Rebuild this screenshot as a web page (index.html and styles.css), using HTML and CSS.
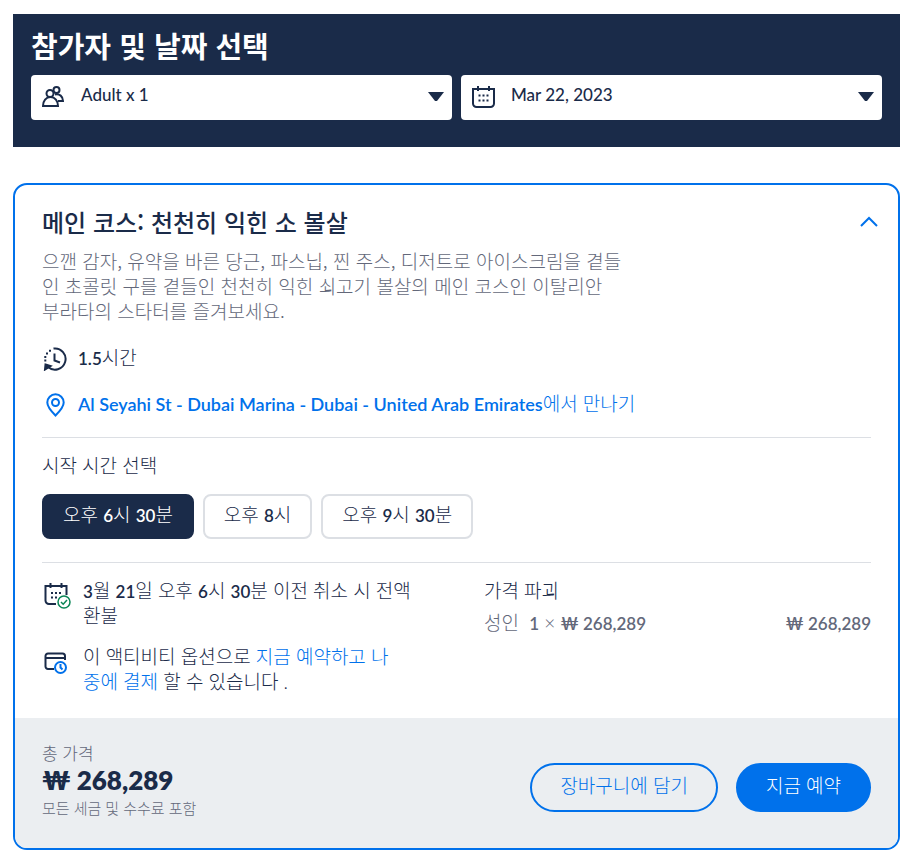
FILE: index.html
```html
<!DOCTYPE html>
<html lang="ko">
<head>
    <meta charset="UTF-8">
    <meta name="viewport" content="width=device-width, initial-scale=1.0">
    <title>참가자 및 날짜 선택</title>
    <link rel="stylesheet" href="styles.css">
</head>
<body>
    <form class="picker">
        <h2>참가자 및 날짜 선택</h2>
        <div class="picker-fields">
            <div class="field">
                <svg class="icon" viewBox="0 0 24 24" aria-hidden="true">
                    <circle cx="15.500" cy="5" r="3"/>
                    <path d="M14 9.500c4.500-1.200 8 2 8 6.500h-5"/>
                    <circle class="cover" cx="9" cy="8.500" r="3.500"/>
                    <path class="cover" d="M2 21c0-5 3-9 7.500-9S17 16 17 21z"/>
                </svg>
                <select id="participants" aria-label="참가자">
                    <option>Adult x 1</option>
                </select>
                <span class="arrow"></span>
            </div>
            <div class="field">
                <svg class="icon" viewBox="0 0 24 24" aria-hidden="true">
                    <path d="M2 4h21v14.500a3.500 3.500 0 0 1-3.500 3.500h-14A3.500 3.500 0 0 1 2 18.500zM7 1v5M18 1v5"/>
                    <path class="dots" d="M7.500 10.500h10M7.500 15.500h10"/>
                </svg>
                <select id="date" aria-label="날짜">
                    <option>Mar 22, 2023</option>
                </select>
                <span class="arrow"></span>
            </div>
        </div>
    </form>

    <article class="option">
        <div class="option-body">
            <header class="option-header">
                <h3>메인 코스: 천천히 익힌 소 볼살</h3>
                <button type="button" class="toggle" aria-label="접기" aria-expanded="true">
                    <svg viewBox="0 0 20 12" aria-hidden="true"><path d="M2 10l8-8 8 8"/></svg>
                </button>
            </header>
            <p class="description">으깬 감자, 유약을 바른 당근, 파스닙, 찐 주스, 디저트로 아이스크림을 곁들<br>인 초콜릿 구를 곁들인 천천히 익힌 쇠고기 볼살의 메인 코스인 이탈리안<br>부라타의 스타터를 즐겨보세요.</p>

            <div class="info">
                <svg class="icon" viewBox="0 0 24 24" aria-hidden="true">
                    <path d="M10.500 1.500A10.600 10.600 0 1 1 5 20"/>
                    <path d="M11.500 6.500v7l5.500 2"/>
                    <path class="solid" d="M2.500 17.500l5 1.500-5.500 3.500z"/>
                    <path d="M6 3.800h2M3 6.500h2M1.300 10h2M1.300 13.500h2"/>
                </svg>
                <span><b>1.5</b>시간</span>
            </div>
            <div class="info">
                <svg class="icon blue" viewBox="0 0 24 24" aria-hidden="true">
                    <path d="M12.500 22.500c-5-5-8.200-9-8.200-13a8.200 8.200 0 0 1 16.400 0c0 4-3.200 8-8.200 13z"/>
                    <circle cx="12.500" cy="9.500" r="3.500"/>
                </svg>
                <a href="#"><b class="address">Al Seyahi St - Dubai Marina - Dubai - United Arab Emirates</b>에서 만나기</a>
            </div>

            <section class="times">
                <h4>시작 시간 선택</h4>
                <div class="time-list">
                    <button type="button" class="time selected" aria-pressed="true">오후 <b>6</b>시 <b>30</b>분</button>
                    <button type="button" class="time" aria-pressed="false">오후 <b>8</b>시</button>
                    <button type="button" class="time" aria-pressed="false">오후 <b>9</b>시 <b>30</b>분</button>
                </div>
            </section>

            <section class="details">
                <div class="policies">
                    <div class="policy">
                        <svg class="icon-lg" viewBox="0 0 28 28" aria-hidden="true">
                            <path d="M13 22H6a3.500 3.500 0 0 1-3.500-3.500V4h21v9M7.500 1v5M18.500 1v5"/>
                            <path class="dots" d="M8 11h10M8 15.500h6"/>
                            <circle class="green" cx="21" cy="20" r="6"/>
                            <path class="green" d="M18 20l2.200 2.200L24 18"/>
                        </svg>
                        <p><b>3</b>월 <b>21</b>일 오후 <b>6</b>시 <b>30</b>분 이전 취소 시 전액<br>환불</p>
                    </div>
                    <div class="policy">
                        <svg class="icon-lg" viewBox="0 0 28 28" aria-hidden="true">
                            <path d="M11 21H5a2.500 2.500 0 0 1-2.500-2.500V8A2.500 2.500 0 0 1 5 5.500h14.500A2.500 2.500 0 0 1 22 8v4M2.500 10H22"/>
                            <circle class="blue" cx="17.500" cy="19.500" r="5.500"/>
                            <path class="blue" d="M17.500 16v3.500l2 2"/>
                        </svg>
                        <p>이 액티비티 옵션으로 <a href="#">지금 예약하고 나<br>중에 결제</a> 할 수 있습니다 .</p>
                    </div>
                </div>
                <div class="breakdown">
                    <h4>가격 파괴</h4>
                    <div class="price-row">
                        <span>성인&nbsp; <b>1</b> × <b>₩ 268,289</b></span>
                        <b>₩ 268,289</b>
                    </div>
                </div>
            </section>
        </div>

        <footer class="option-footer">
            <div class="total">
                <span class="total-label">총 가격</span>
                <strong>₩ 268,289</strong>
                <span class="total-note">모든 세금 및 수수료 포함</span>
            </div>
            <div class="actions">
                <button type="button" class="btn outline">장바구니에 담기</button>
                <button type="button" class="btn primary">지금 예약</button>
            </div>
        </footer>
    </article>
</body>
</html>
```
FILE: styles.css
```css
* {
    box-sizing: border-box;
}
body {
    margin: 0;
    padding: 14px 13px 8px;
    font-family: Lato, "Noto Sans CJK KR", sans-serif;
    font-size: 19px;
    font-weight: 300;
    line-height: 25px;
    color: #1a2b49;
    background: white;
}
h2, h3, h4, p {
    margin: 0;
}
h2, h3, .description {
    font-family: "Noto Sans CJK KR", sans-serif;
}
b {
    font-size: 17px;
    font-weight: 600;
    line-height: 1;
}
a {
    color: #0071eb;
    text-decoration: none;
}
button, select {
    font: inherit;
    color: inherit;
    cursor: pointer;
}
svg {
    flex: none;
    fill: none;
    stroke: currentColor;
    stroke-width: 2;
}
.icon {
    width: 24px;
    height: 24px;
}
.icon-lg {
    width: 28px;
    height: 28px;
}
.dots {
    stroke-dasharray: 2 2;
}
.solid {
    fill: currentColor;
}
.cover {
    fill: white;
}
.blue {
    color: #0071eb;
    stroke: #0071eb;
}
.green {
    stroke: #0a8556;
    stroke-width: 1.5;
}

.picker {
    padding: 14px 18px 27px;
    background: #1a2b49;
}
.picker h2 {
    margin-bottom: 13px;
    font-size: 29px;
    font-weight: 700;
    line-height: 34px;
    color: white;
}
.picker-fields {
    display: grid;
    grid-template-columns: 1fr 1fr;
    gap: 9px;
}
.field {
    display: grid;
    grid-template-columns: 50px 1fr 16px;
    align-items: center;
    height: 45px;
    padding-right: 8px;
    padding-bottom: 2px;
    border-radius: 4px;
    background: white;
}
.field .icon {
    grid-area: 1 / 1;
    margin-left: 10px;
}
.field select {
    grid-area: 1 / 1 / 2 / 4;
    height: 43px;
    padding: 0 20px 4px 50px;
    border: none;
    background: none;
    appearance: none;
    font-size: 17px;
    font-weight: 500;
}
.arrow {
    grid-area: 1 / 3;
    border: 7px solid transparent;
    border-top: 9px solid #1a2b49;
    border-bottom: none;
    pointer-events: none;
}

.option {
    margin-top: 36px;
    border: 2px solid #0071eb;
    border-radius: 14px;
    overflow: hidden;
}
.option-body {
    padding: 21px 27px 24px;
}
.option-header {
    display: flex;
    justify-content: space-between;
    align-items: center;
    margin-bottom: 10px;
}
.option-header h3 {
    font-size: 24px;
    font-weight: 500;
    line-height: 32px;
}
.toggle {
    display: flex;
    margin-right: -8px;
    padding: 0;
    border: none;
    background: none;
    color: #0071eb;
}
.toggle svg {
    width: 20px;
    height: 12px;
}
.description {
    margin-bottom: 22px;
    color: #63687a;
}
.info {
    display: flex;
    gap: 11px;
    margin: 0 0 21px 1px;
}
.info .icon {
    margin-top: 2px;
    margin-bottom: -1px;
}
.address {
    font-size: 18px;
}
.times {
    padding: 15px 0 23px;
    border-top: 1px solid #dcdfe4;
    border-bottom: 1px solid #dcdfe4;
}
h4 {
    font-size: 19px;
    font-weight: 300;
}
.time-list {
    display: flex;
    flex-wrap: wrap;
    gap: 9px;
    margin-top: 16px;
}
.time {
    height: 45px;
    padding: 0 19px 4px;
    border: 2px solid #dcdfe4;
    border-radius: 8px;
    background: white;
}
.time.selected {
    border-color: #1a2b49;
    background: #1a2b49;
    color: white;
}
.details {
    display: grid;
    grid-template-columns: 1fr 1fr;
    gap: 55px;
    padding-top: 15px;
}
.policies {
    display: grid;
    gap: 16px;
}
.policy {
    display: flex;
    gap: 12px;
    padding-left: 1px;
}
.policy .icon-lg {
    margin-top: 4px;
}
.price-row {
    display: flex;
    justify-content: space-between;
    align-items: baseline;
    margin-top: 7px;
    color: #63687a;
}

.option-footer {
    display: flex;
    justify-content: space-between;
    align-items: center;
    padding: 26px 27px 27px;
    background: #ebeef1;
}
.total {
    display: grid;
    color: #63687a;
}
.total-label {
    font-size: 17px;
    line-height: 20px;
}
.total strong {
    font-size: 26px;
    font-weight: 800;
    line-height: 32px;
    color: #1a2b49;
}
.total-note {
    font-size: 15px;
    line-height: 25px;
}
.actions {
    display: flex;
    gap: 18px;
    margin-top: 10px;
}
.btn {
    height: 49px;
    padding: 0 28px 4px;
    border: 2px solid #0071eb;
    border-radius: 25px;
    background: none;
    color: #0071eb;
}
.btn.primary {
    background: #0071eb;
    color: white;
}
```
